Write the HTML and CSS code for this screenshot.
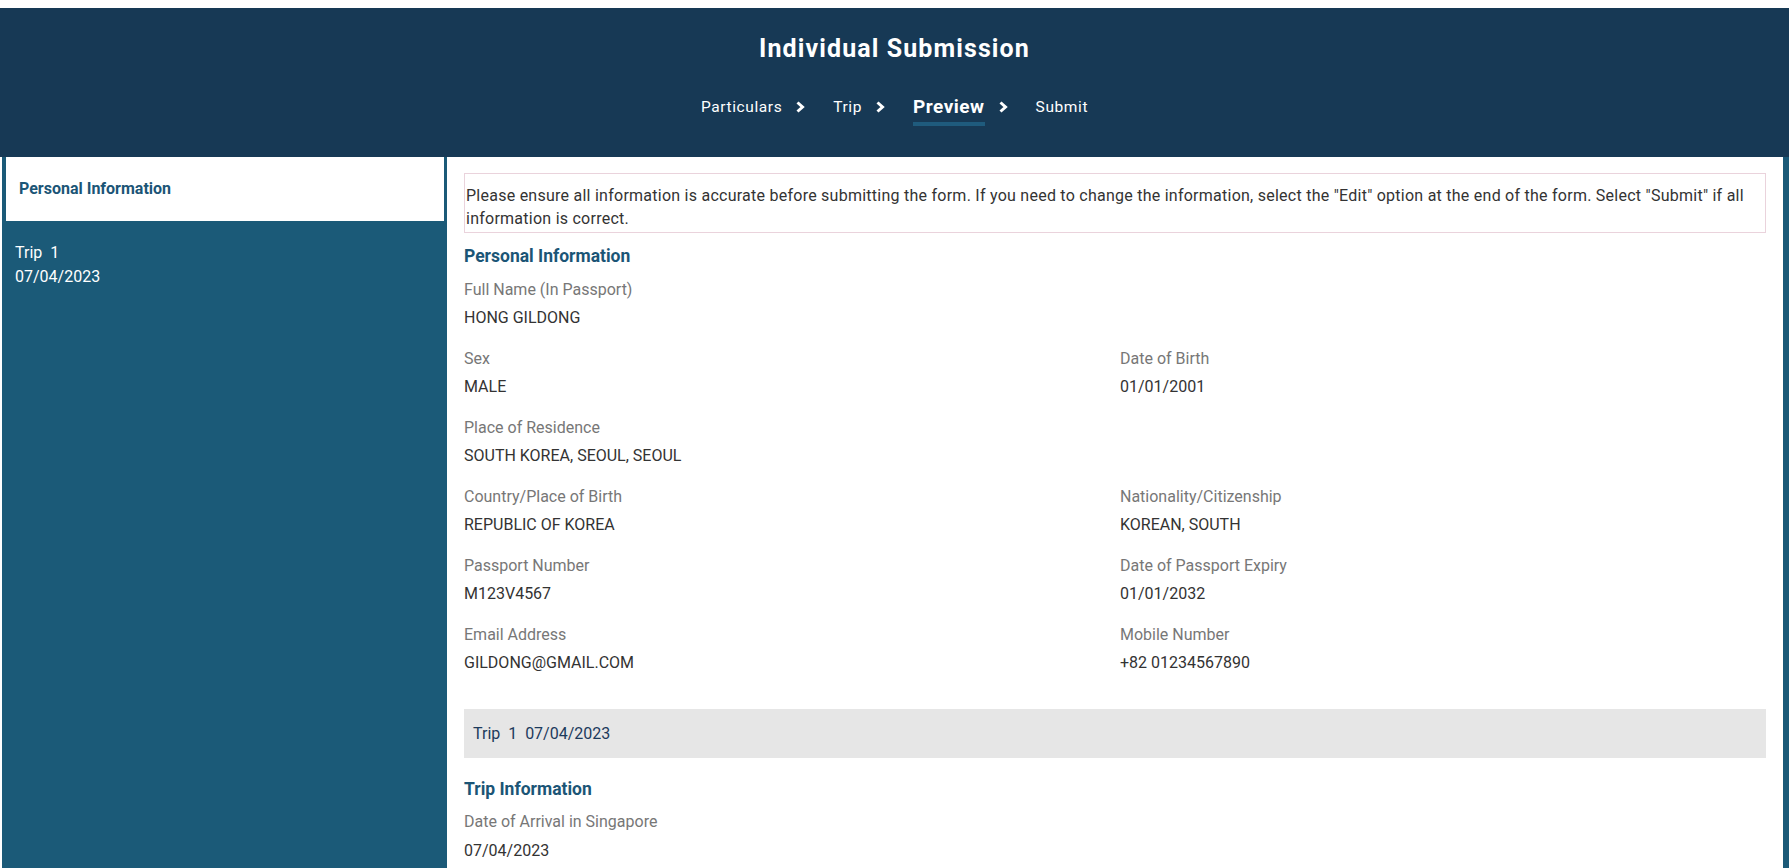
FILE: index.html
```html
<!DOCTYPE html>
<html lang="en">
<head>
<meta charset="utf-8">
<title>Individual Submission</title>
<link rel="stylesheet" href="styles.css">
</head>
<body>
<header class="top">
  <h1 class="title">Individual Submission</h1>
  <nav class="steps">
    <span class="step">Particulars</span>
    <svg class="chev" viewBox="0 0 10 12" width="10" height="12"><polyline points="2.5,1.5 7.5,6 2.5,10.5" fill="none" stroke="#fff" stroke-width="3" stroke-linejoin="miter"/></svg>
    <span class="step">Trip</span>
    <svg class="chev" viewBox="0 0 10 12" width="10" height="12"><polyline points="2.5,1.5 7.5,6 2.5,10.5" fill="none" stroke="#fff" stroke-width="3" stroke-linejoin="miter"/></svg>
    <span class="step active">Preview</span>
    <svg class="chev" viewBox="0 0 10 12" width="10" height="12"><polyline points="2.5,1.5 7.5,6 2.5,10.5" fill="none" stroke="#fff" stroke-width="3" stroke-linejoin="miter"/></svg>
    <span class="step">Submit</span>
  </nav>
</header>
<div class="layout">
  <aside class="side">
    <div class="side-item current">Personal Information</div>
    <div class="side-item trip">Trip&nbsp; 1<br>07/04/2023</div>
  </aside>
  <main class="main">
    <div class="notice">Please ensure all information is accurate before submitting the form. If you need to change the information, select the "Edit" option at the end of the form. Select "Submit" if all information is correct.</div>
    <h2 class="section">Personal Information</h2>
    <div class="grid">
      <div class="field full"><div class="label">Full Name (In Passport)</div><div class="value">HONG GILDONG</div></div>
      <div class="field"><div class="label">Sex</div><div class="value">MALE</div></div>
      <div class="field"><div class="label">Date of Birth</div><div class="value">01/01/2001</div></div>
      <div class="field full"><div class="label">Place of Residence</div><div class="value">SOUTH KOREA, SEOUL, SEOUL</div></div>
      <div class="field"><div class="label">Country/Place of Birth</div><div class="value">REPUBLIC OF KOREA</div></div>
      <div class="field"><div class="label">Nationality/Citizenship</div><div class="value">KOREAN, SOUTH</div></div>
      <div class="field"><div class="label">Passport Number</div><div class="value">M123V4567</div></div>
      <div class="field"><div class="label">Date of Passport Expiry</div><div class="value">01/01/2032</div></div>
      <div class="field"><div class="label">Email Address</div><div class="value">GILDONG@GMAIL.COM</div></div>
      <div class="field"><div class="label">Mobile Number</div><div class="value">+82 01234567890</div></div>
    </div>
    <div class="tripbar">Trip&nbsp; 1&nbsp; 07/04/2023</div>
    <h2 class="section trip-head">Trip Information</h2>
    <div class="grid">
      <div class="field full"><div class="label">Date of Arrival in Singapore</div><div class="value">07/04/2023</div></div>
    </div>
  </main>
</div>
</body>
</html>
```
FILE: styles.css
```css
* { box-sizing: border-box; }
html, body { margin: 0; padding: 0; }
body {
  padding-top: 8px;
  font-family: Roboto, "Liberation Sans", Arial, sans-serif;
  font-size: 16px;
  color: #333;
  background: #fff;
}
.top {
  background: #173955;
  height: 149px;
  padding-top: 27px;
  color: #fff;
}
.title {
  margin: 0;
  text-align: center;
  font-size: 25px;
  line-height: 28px;
  font-weight: 700;
  letter-spacing: 1.1px;
}
.steps {
  margin-top: 33px;
  display: flex;
  justify-content: center;
  align-items: center;
  height: 22px;
}
.step {
  font-size: 15.5px;
  line-height: 22px;
  letter-spacing: 0.6px;
}
.step.active {
  font-size: 19px;
  font-weight: 700;
  letter-spacing: 0.5px;
  border-bottom: 4px solid #1f5b7d;
  padding-bottom: 4px;
  margin-bottom: -8px;
}
.chev {
  margin: 0 28px 0 13px;
  display: block;
}
.layout {
  display: flex;
  margin-left: 2px;
  background: #1b5a78;
  min-height: calc(100vh - 157px);
}
.side {
  width: 445px;
  flex: none;
  padding: 0 3px 0 4px;
}
.side-item {
  line-height: 24px;
  color: #fff;
}
.side-item.current {
  background: #fff;
  color: #1b5576;
  font-weight: 700;
  font-size: 16px;
  padding: 20px 13px;
}
.side-item.trip {
  margin-top: 20px;
  padding: 0 9px;
  font-size: 16px;
}
.main {
  flex: 1;
  background: #fff;
  margin-right: 6px;
  padding: 16px 17px 20px;
}
.notice {
  border: 1px solid #ead3dc;
  padding: 10px 1px 2px;
  line-height: 23px;
  letter-spacing: 0.25px;
  color: #333;
}
.section {
  margin: 11px 0 10px;
  font-size: 17.5px;
  line-height: 24px;
  font-weight: 700;
  color: #1b5576;
}
.grid {
  display: grid;
  grid-template-columns: 1fr 1fr;
  column-gap: 10px;
}
.field { margin-bottom: 17px; }
.field.full { grid-column: 1 / -1; }
.label {
  color: #777;
  line-height: 24px;
}
.value {
  margin-top: 4px;
  color: #333;
  line-height: 24px;
}
.tripbar {
  margin-top: 17px;
  background: #e6e6e6;
  height: 49px;
  padding: 0 9px;
  line-height: 49px;
  color: #1c3a5c;
}
.section.trip-head { margin: 19px 0 9px; }
.trip-head + .grid .value { margin-top: 5px; }
```
